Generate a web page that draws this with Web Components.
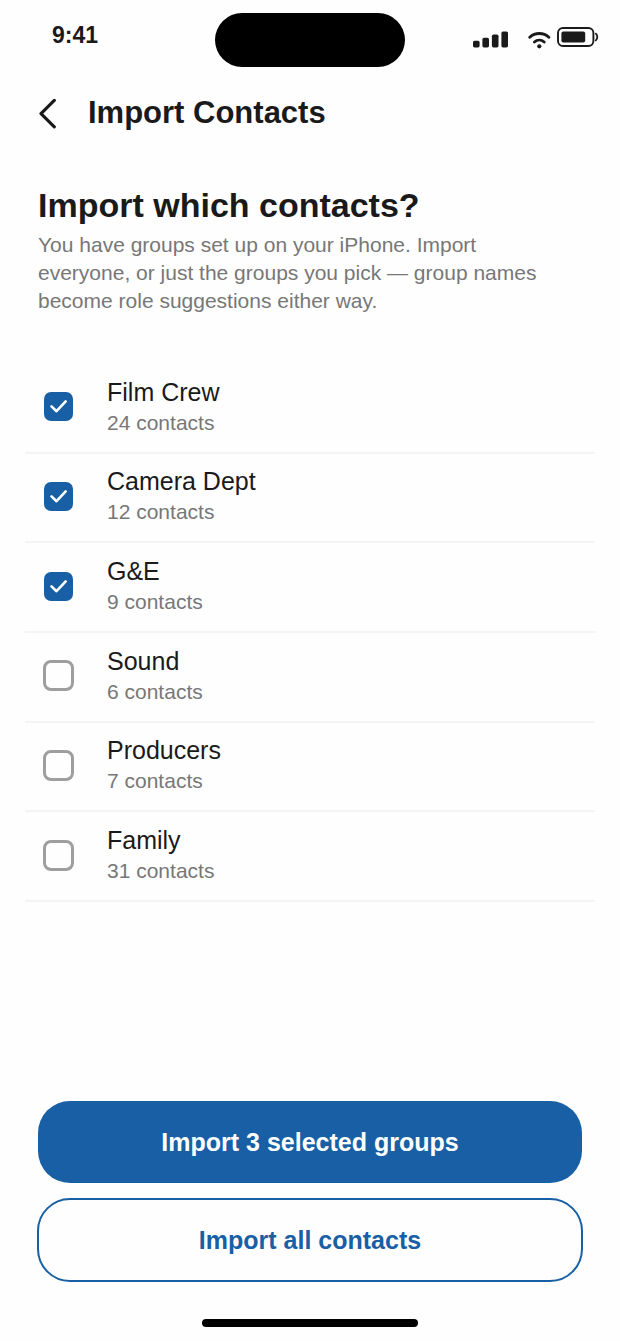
<!DOCTYPE html>
<html lang="en">
<head>
<meta charset="utf-8">
<meta name="viewport" content="width=device-width, initial-scale=1">
<title>Import Contacts</title>
<style>
  html {
    --ink: #1a1a1a;
    --muted: #777;
    --accent: #185fa5;
    --line: #f4f4f4;
  }

  body {
    margin: 0;
    background: #fefefe;
    color: var(--ink);
    font-family: "Liberation Sans", Arial, Helvetica, sans-serif;
  }
</style>
</head>
<body>
<import-screen></import-screen>

<script>
class StatusBar extends HTMLElement {
  constructor() {
    super();
    this.attachShadow({ mode: "open" });
  }

  get time() {
    return this.getAttribute("time");
  }

  connectedCallback() {
    this.shadowRoot.innerHTML = `
      <style>
        :host {
          display: grid;
          grid-template-columns: 1fr 190px 1fr;
          padding-top: 13px;
          color: var(--ink);
        }

        time {
          padding: 8px 0 0 52px;
          font-size: 23px;
          font-weight: bold;
          line-height: 28px;
        }

        .island {
          height: 54px;
          border-radius: 27px;
          background: #000;
        }

        .icons {
          display: flex;
          justify-content: flex-end;
          padding: 14px 21px 0 0;
        }

        svg {
          display: block;
          height: 22px;
        }

        .signal { margin-right: 20px; }
        .wifi { margin-right: 6px; }
      </style>

      <time>${this.time}</time>
      <div class="island"></div>
      <div class="icons">
        <svg class="signal" width="35" viewBox="0 0 35 22" fill="currentColor" aria-hidden="true">
          <rect x="0" y="13.8" width="6.6" height="6.6" rx="1.6"/>
          <rect x="9.4" y="10.8" width="6.6" height="9.6" rx="1.6"/>
          <rect x="18.9" y="7.6" width="6.6" height="12.8" rx="1.6"/>
          <rect x="28.4" y="4.4" width="6.6" height="16" rx="1.6"/>
        </svg>
        <svg class="wifi" width="23" viewBox="0 0 23 22" fill="none" stroke="currentColor" stroke-width="2.9" stroke-linecap="round" aria-hidden="true">
          <path d="M1.8 10.2a14 14 0 0 1 19 0"/>
          <path d="M6.4 15a7.4 7.4 0 0 1 9.8 0"/>
          <circle cx="11.3" cy="19.3" r="2.1" fill="currentColor" stroke="none"/>
        </svg>
        <svg width="42" viewBox="0 0 42 22" fill="none" stroke="currentColor" aria-hidden="true">
          <rect x="1" y="1" width="35.4" height="18" rx="5" stroke-width="1.9"/>
          <rect x="4.4" y="4.4" width="23.8" height="11.2" rx="2" fill="currentColor" stroke="none"/>
          <path d="M38.8 6.6c2 1.8 2 5 0 6.8" stroke-width="1.8" stroke-linecap="round"/>
        </svg>
      </div>
    `;
  }
}

class NavHeader extends HTMLElement {
  constructor() {
    super();
    this.attachShadow({ mode: "open" });
    this.shadowRoot.innerHTML = `
      <style>
        :host {
          display: flex;
          align-items: center;
          gap: 18px;
          padding: 22px 24px 0;
        }

        button {
          display: grid;
          place-items: center;
          width: 46px;
          height: 48px;
          padding: 0;
          border: 0;
          background: none;
          color: var(--ink);
          cursor: pointer;
        }

        h1 {
          margin: 0;
          font-size: 31px;
          line-height: 36px;
        }
      </style>

      <button type="button" aria-label="Back">
        <svg width="20" height="32" viewBox="0 0 20 32" fill="none" stroke="currentColor" stroke-width="3.2" stroke-linecap="round" stroke-linejoin="round">
          <path d="M17.3 3.4 4 16.6 17.3 29.8"/>
        </svg>
      </button>
      <h1><slot></slot></h1>
    `;
  }
}

class IntroText extends HTMLElement {
  constructor() {
    super();
    this.attachShadow({ mode: "open" });
    this.shadowRoot.innerHTML = `
      <style>
        :host {
          display: block;
          padding: 48px 38px 0;
        }

        h2 {
          margin: 0 0 6px;
          font-size: 34px;
          line-height: 40px;
        }

        p {
          max-width: 24em;
          margin: 0;
          color: var(--muted);
          font-size: 21px;
          line-height: 28px;
        }
      </style>

      <h2><slot name="title"></slot></h2>
      <p><slot></slot></p>
    `;
  }
}

class GroupRow extends HTMLElement {
  constructor() {
    super();
    this.attachShadow({ mode: "open" });
  }

  get name() {
    return this.getAttribute("name");
  }

  get count() {
    return this.getAttribute("count");
  }

  get checked() {
    return this.shadowRoot.querySelector("input").checked;
  }

  connectedCallback() {
    this.shadowRoot.innerHTML = `
      <style>
        :host {
          display: grid;
          border-bottom: 2px solid var(--line);
        }

        label {
          display: flex;
          align-items: center;
          gap: 33px;
          padding: 0 18px 2px;
          cursor: pointer;
        }

        .box {
          display: grid;
          place-items: center;
        }

        .box > * {
          grid-area: 1 / 1;
        }

        input {
          appearance: none;
          box-sizing: border-box;
          width: 31px;
          height: 31px;
          margin: 0;
          border: 3px solid #9e9e9e;
          border-radius: 8px;
          cursor: pointer;
        }

        input:checked {
          border: 1px solid transparent;
          background: var(--accent) padding-box;
        }

        svg {
          display: none;
          pointer-events: none;
        }

        input:checked + svg {
          display: block;
        }

        .name {
          display: block;
          font-size: 25px;
          line-height: 32px;
        }

        .count {
          display: block;
          color: var(--muted);
          font-size: 21px;
          line-height: 30px;
        }
      </style>

      <label>
        <span class="box">
          <input type="checkbox" ${this.hasAttribute("selected") ? "checked" : ""}>
          <svg width="19" height="15" viewBox="0 0 19 15" fill="none" stroke="#fff" stroke-width="2.6" stroke-linecap="round" stroke-linejoin="round">
            <path d="M2.5 7.4 7.5 12.2 16.7 2.4"/>
          </svg>
        </span>
        <span>
          <span class="name">${this.name}</span>
          <span class="count">${this.count} contacts</span>
        </span>
      </label>
    `;

    this.shadowRoot.querySelector("input").addEventListener("change", () => {
      this.dispatchEvent(new CustomEvent("group-toggle", { bubbles: true }));
    });
  }
}

class GroupList extends HTMLElement {
  constructor() {
    super();
    this.attachShadow({ mode: "open" });
    this.shadowRoot.innerHTML = `
      <style>
        :host {
          display: grid;
          grid-auto-rows: 1fr;
          min-height: 538px;
          margin: 49px 25px 0;
        }
      </style>
      <slot></slot>
    `;
  }
}

class ActionButton extends HTMLElement {
  constructor() {
    super();
    this.attachShadow({ mode: "open" });
    this.shadowRoot.innerHTML = `
      <style>
        :host {
          display: block;
        }

        button {
          width: 100%;
          min-height: 84px;
          border: 2px solid var(--accent);
          border-radius: 33px;
          background: transparent;
          color: var(--accent);
          font: bold 25px/30px "Liberation Sans", Arial, Helvetica, sans-serif;
          cursor: pointer;
        }

        :host([primary]) button {
          border: 1px solid transparent;
          background: var(--accent) padding-box;
          color: #fff;
        }
      </style>
      <button type="button"><slot></slot></button>
    `;
  }
}

class ImportScreen extends HTMLElement {
  constructor() {
    super();
    this.attachShadow({ mode: "open" });
    this.shadowRoot.innerHTML = `
      <style>
        :host {
          display: flex;
          flex-direction: column;
          box-sizing: border-box;
          min-height: 100vh;
          padding-bottom: 14px;
        }

        footer {
          display: grid;
          gap: 14px;
          margin-top: auto;
          padding: 40px 37px 37px;
        }

        .home {
          align-self: center;
          width: 216px;
          height: 8px;
          border-radius: 4px;
          background: #000;
        }
      </style>

      <status-bar time="9:41"></status-bar>
      <nav-header>Import Contacts</nav-header>

      <intro-text>
        <span slot="title">Import which contacts?</span>
        You have groups set up on your iPhone. Import everyone, or just the groups you pick — group names become role suggestions either way.
      </intro-text>

      <group-list>
        <group-row name="Film Crew" count="24" selected></group-row>
        <group-row name="Camera Dept" count="12" selected></group-row>
        <group-row name="G&amp;E" count="9" selected></group-row>
        <group-row name="Sound" count="6"></group-row>
        <group-row name="Producers" count="7"></group-row>
        <group-row name="Family" count="31"></group-row>
      </group-list>

      <footer>
        <action-button primary>Import 3 selected groups</action-button>
        <action-button>Import all contacts</action-button>
      </footer>
      <div class="home"></div>
    `;
  }

  connectedCallback() {
    this.shadowRoot.addEventListener("group-toggle", () => this.updateCount());
  }

  updateCount() {
    const rows = [...this.shadowRoot.querySelectorAll("group-row")];
    const n = rows.filter((row) => row.checked).length;
    this.shadowRoot.querySelector("action-button[primary]").textContent =
      `Import ${n} selected ${n === 1 ? "group" : "groups"}`;
  }
}

window.customElements.define("status-bar", StatusBar);
window.customElements.define("nav-header", NavHeader);
window.customElements.define("intro-text", IntroText);
window.customElements.define("group-row", GroupRow);
window.customElements.define("group-list", GroupList);
window.customElements.define("action-button", ActionButton);
window.customElements.define("import-screen", ImportScreen);
</script>
</body>
</html>
